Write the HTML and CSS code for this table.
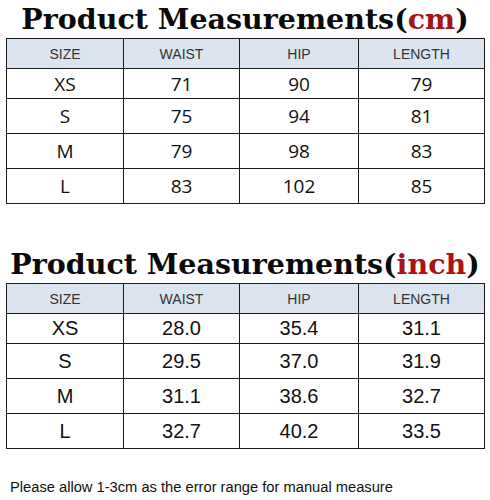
FILE: index.html
```html
<!DOCTYPE html>
<html lang="en">
<head>
  <meta charset="UTF-8">
  <meta name="viewport" content="width=device-width, initial-scale=1.0">
  <title>Product Measurements</title>
  <link rel="stylesheet" href="styles.css">
</head>
<body>

  <div class="sheet">
    <h1 class="title">Product Measurements(<span class="unit">cm</span>)</h1>
    <table class="sizes cm">
      <tr class="head">
        <th>SIZE</th><th>WAIST</th><th>HIP</th><th>LENGTH</th>
      </tr>
      <tr class="first"><td>XS</td><td>71</td><td>90</td><td>79</td></tr>
      <tr><td>S</td><td>75</td><td>94</td><td>81</td></tr>
      <tr><td>M</td><td>79</td><td>98</td><td>83</td></tr>
      <tr><td>L</td><td>83</td><td>102</td><td>85</td></tr>
    </table>

    <h1 class="title second">Product Measurements(<span class="unit">inch</span>)</h1>
    <table class="sizes inch">
      <tr class="head">
        <th>SIZE</th><th>WAIST</th><th>HIP</th><th>LENGTH</th>
      </tr>
      <tr class="first"><td>XS</td><td>28.0</td><td>35.4</td><td>31.1</td></tr>
      <tr><td>S</td><td>29.5</td><td>37.0</td><td>31.9</td></tr>
      <tr><td>M</td><td>31.1</td><td>38.6</td><td>32.7</td></tr>
      <tr><td>L</td><td>32.7</td><td>40.2</td><td>33.5</td></tr>
    </table>

    <p class="note">Please allow 1-3cm as the error range for manual measure</p>
  </div>

</body>
</html>
```

FILE: styles.css
```css
body {
  margin: 0;
  background-color: #fff;
  font-family: 'Liberation Sans', Arial, sans-serif;
}

.sheet {
  width: 490px;
}

.title {
  margin: 0;
  height: 38px;
  line-height: 38px;
  text-align: center;
  font-family: 'DejaVu Serif', 'Liberation Serif', serif;
  font-weight: bold;
  font-size: 28.5px;
  color: #0a0a0a;
  white-space: nowrap;
}

.title.second {
  margin-top: 41px;
}

.unit {
  color: #a8141a;
}

.sizes {
  border-collapse: collapse;
  margin-left: 6px;
  table-layout: fixed;
}

.sizes th,
.sizes td {
  border: 1px solid #1a1a1a;
  text-align: center;
  padding: 0;
}

.sizes th:nth-child(1) { width: 116px; }
.sizes th:nth-child(2) { width: 115px; }
.sizes th:nth-child(3) { width: 118px; }
.sizes th:nth-child(4) { width: 125px; }

.sizes .head th {
  background-color: #dce4f0;
  font-weight: normal;
  font-size: 14px;
  color: #333;
  height: 29px;
}

.sizes tr td {
  height: 34px;
}

.sizes tr.first td {
  height: 29px;
}

.cm td {
  font-family: 'Open Sans', 'Noto Sans', sans-serif;
  font-size: 19px;
  color: #111;
}

.inch td {
  font-family: 'Liberation Sans', Arial, sans-serif;
  font-size: 20px;
  color: #111;
}

.note {
  margin: 30px 0 0 10px;
  font-size: 14.7px;
  color: #111;
}
```
